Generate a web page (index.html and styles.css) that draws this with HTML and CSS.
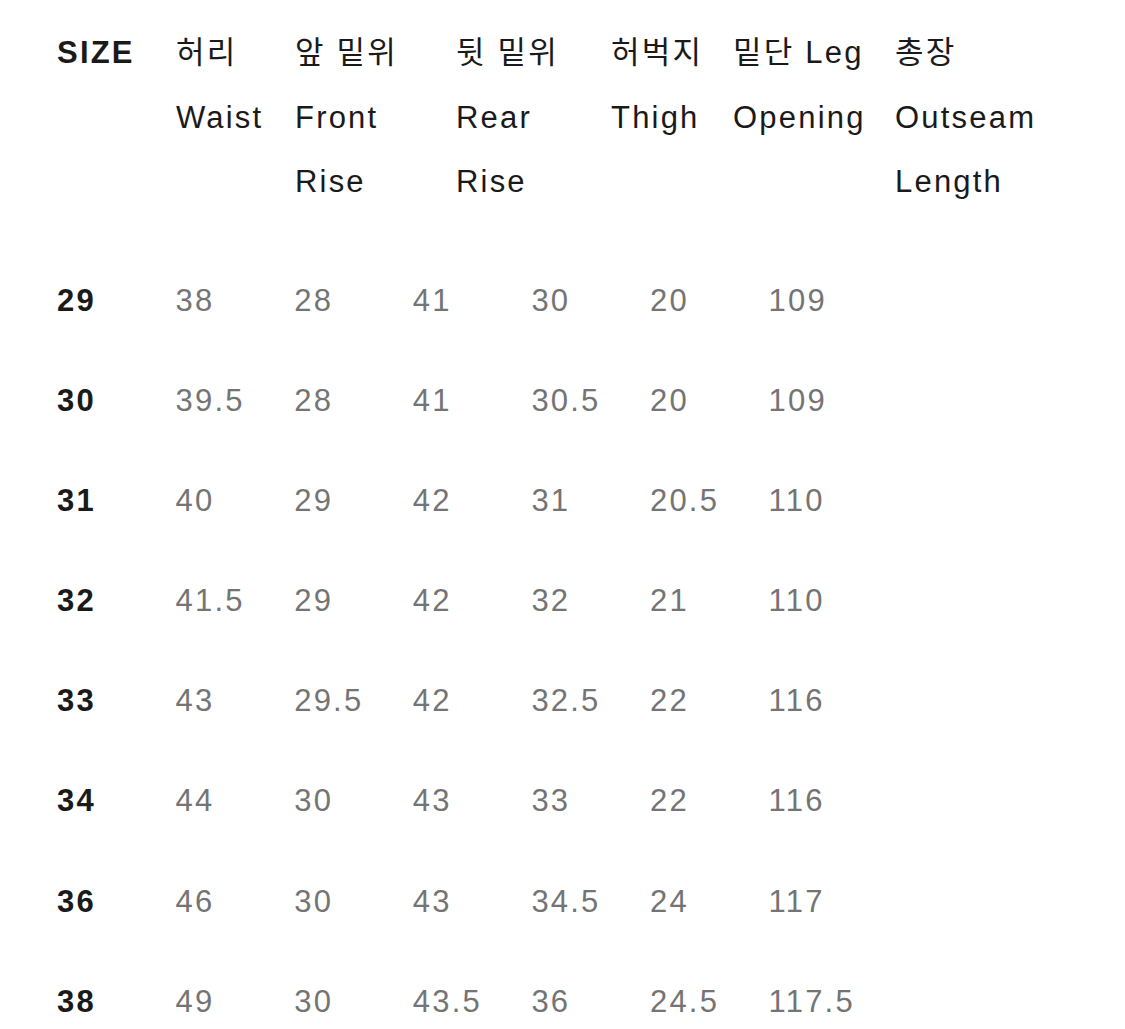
FILE: index.html
```html
<!DOCTYPE html>
<html lang="ko">
<head>
<meta charset="utf-8">
<title>Size chart</title>
<link rel="stylesheet" href="styles.css">
</head>
<body>
<div class="chart">
  <div class="head">
    <div class="hcell"><div class="line strong">SIZE</div></div>
    <div class="hcell"><div class="line">허리</div><div class="line">Waist</div></div>
    <div class="hcell"><div class="line">앞 밑위</div><div class="line">Front</div><div class="line">Rise</div></div>
    <div class="hcell"><div class="line">뒷 밑위</div><div class="line">Rear</div><div class="line">Rise</div></div>
    <div class="hcell"><div class="line">허벅지</div><div class="line">Thigh</div></div>
    <div class="hcell"><div class="line">밑단 Leg</div><div class="line">Opening</div></div>
    <div class="hcell"><div class="line">총장</div><div class="line">Outseam</div><div class="line">Length</div></div>
  </div>
  <div class="rows">
    <div class="row"><span class="size">29</span><span>38</span><span>28</span><span>41</span><span>30</span><span>20</span><span>109</span></div>
    <div class="row"><span class="size">30</span><span>39.5</span><span>28</span><span>41</span><span>30.5</span><span>20</span><span>109</span></div>
    <div class="row"><span class="size">31</span><span>40</span><span>29</span><span>42</span><span>31</span><span>20.5</span><span>110</span></div>
    <div class="row"><span class="size">32</span><span>41.5</span><span>29</span><span>42</span><span>32</span><span>21</span><span>110</span></div>
    <div class="row"><span class="size">33</span><span>43</span><span>29.5</span><span>42</span><span>32.5</span><span>22</span><span>116</span></div>
    <div class="row"><span class="size">34</span><span>44</span><span>30</span><span>43</span><span>33</span><span>22</span><span>116</span></div>
    <div class="row"><span class="size">36</span><span>46</span><span>30</span><span>43</span><span>34.5</span><span>24</span><span>117</span></div>
    <div class="row"><span class="size">38</span><span>49</span><span>30</span><span>43.5</span><span>36</span><span>24.5</span><span>117.5</span></div>
  </div>
</div>
</body>
</html>
```

FILE: styles.css
```css
html, body {
  margin: 0;
  padding: 0;
  background: #ffffff;
}

body {
  font-family: "Liberation Sans", "Noto Sans CJK KR", sans-serif;
  font-size: 31px;
  letter-spacing: 2.2px;
  color: #1a1a1a;
}

.chart {
  padding: 21px 0 0 57px;
}

.head {
  display: grid;
  grid-template-columns: 119px 119px 161px 155px 122px 162px auto;
}

.line {
  height: 64.5px;
  line-height: 64.5px;
  white-space: nowrap;
}

.strong {
  font-weight: bold;
  color: #1a1a1a;
}

.rows {
  margin-top: 36.5px;
}

.row {
  display: grid;
  grid-template-columns: repeat(7, 118.6px);
  height: 100.1px;
  line-height: 100px;
  color: #747474;
  white-space: nowrap;
}

.size {
  font-weight: bold;
  color: #1a1a1a;
}
```
